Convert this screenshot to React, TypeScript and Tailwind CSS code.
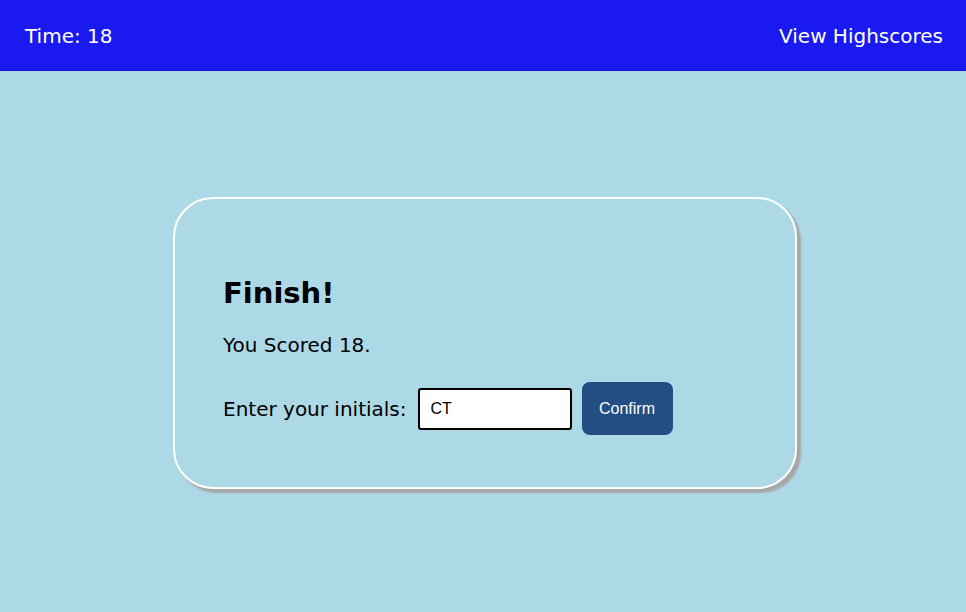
const App = () => {
  return (
    <div
      className="flex flex-col w-[966px] h-[612px] bg-[#add8e6]"
      style={{ fontFamily: '"DejaVu Sans", Verdana, sans-serif' }}
    >
      <header className="flex justify-between items-center h-[71px] pl-[25px] pr-[23px] bg-[#1a1af0] text-white text-[20px]">
        <span>Time: 18</span>
        <span>View Highscores</span>
      </header>
      <main className="flex flex-1 justify-center items-start pt-[126px] pl-[4px]">
        <div className="w-[624px] h-[292px] border-2 border-white rounded-[40px] shadow-[4px_4px_2px_#a6a6a6] px-[48px] pt-[77px]">
          <h1 className="text-[29px] font-bold leading-[34px]">Finish!</h1>
          <p className="mt-[23px] text-[20px] leading-[24px]">You Scored 18.</p>
          <div className="flex items-center gap-[10px] mt-[25px]">
            <label className="text-[20px] leading-[24px] mr-[1px]">Enter your initials:</label>
            <input
              defaultValue="CT"
              className="w-[154px] h-[42px] border-2 border-black rounded-[3px] bg-white px-[11px] text-[16px] outline-none"
              style={{ fontFamily: '"Liberation Sans", Arial, sans-serif' }}
            />
            <button
              className="w-[91px] h-[53px] rounded-[8px] bg-[#224e83] text-white text-[16px]"
              style={{ fontFamily: '"Liberation Sans", Arial, sans-serif' }}
            >
              Confirm
            </button>
          </div>
        </div>
      </main>
    </div>
  )
}

export default App
